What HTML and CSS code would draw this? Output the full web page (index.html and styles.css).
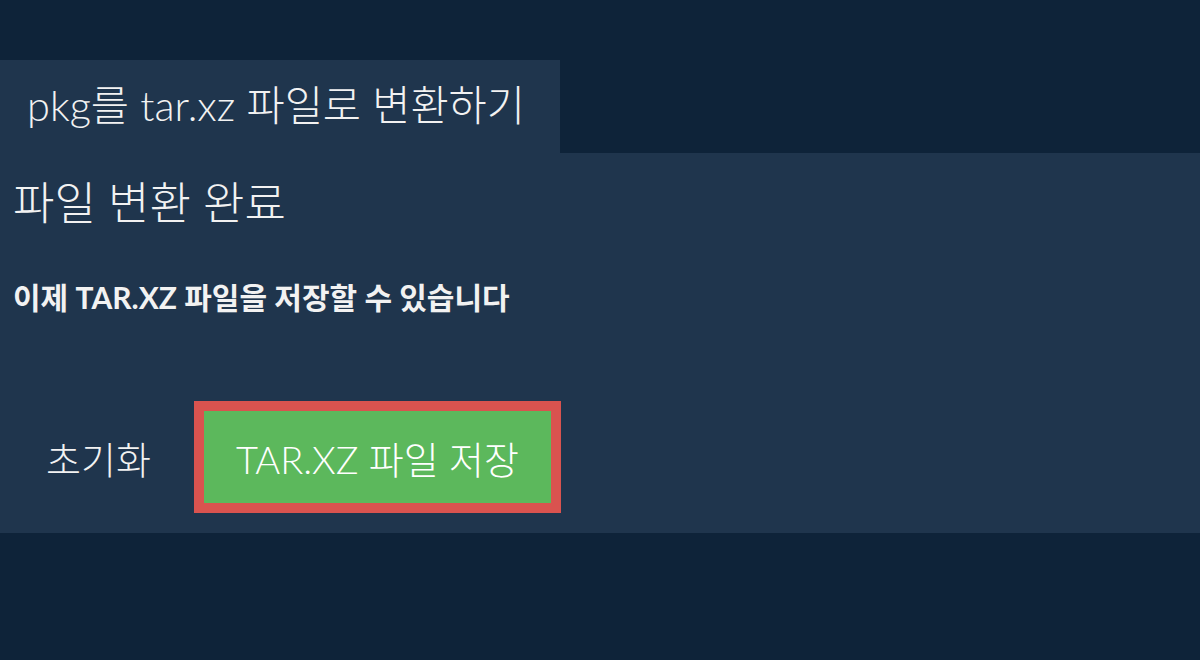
FILE: index.html
```html
<!DOCTYPE html>
<html lang="ko">
<head>
<meta charset="utf-8">
<link rel="stylesheet" href="styles.css">
</head>
<body>
<div class="page">
  <div class="tab">pkg를 tar.xz 파일로 변환하기</div>
  <section class="panel">
    <h1 class="title">파일 변환 완료</h1>
    <p class="subtitle">이제 TAR.XZ 파일을 저장할 수 있습니다</p>
    <div class="actions">
      <button class="btn-reset">초기화</button>
      <button class="btn-save">TAR.XZ 파일 저장</button>
    </div>
  </section>
</div>
</body>
</html>
```
FILE: styles.css
```css
html, body {
  margin: 0;
  padding: 0;
  background: #0e2339;
  font-family: Lato, "Noto Sans CJK KR", sans-serif;
  color: #f2f2f2;
}
.page {
  padding-top: 60px;
}
.tab {
  display: inline-block;
  background: #1f354d;
  height: 93px;
  line-height: 90px;
  padding: 0 35px 0 27px;
  font-size: 41.5px;
  font-weight: 300;
  box-sizing: border-box;
}
.panel {
  background: #1f354d;
  padding: 20px 13px 20px 13px;
}
.title {
  margin: 0;
  font-size: 45px;
  font-weight: 300;
  line-height: 60px;
}
.subtitle {
  margin: 46px 0 0 0;
  font-size: 30px;
  font-weight: 700;
  line-height: 36px;
}
.actions {
  display: flex;
  gap: 10px;
  margin-top: 86px;
  align-items: center;
}
.btn-reset {
  background: transparent;
  border: none;
  color: #f2f2f2;
  font-family: inherit;
  font-size: 38px;
  font-weight: 300;
  padding: 0 33px;
  height: 112px;
  cursor: pointer;
}
.btn-save {
  background: #5cb85c;
  border: 10px solid #d9534f;
  color: #ffffff;
  font-family: inherit;
  font-size: 38px;
  font-weight: 300;
  padding: 0 32px;
  height: 112px;
  cursor: pointer;
}
```
